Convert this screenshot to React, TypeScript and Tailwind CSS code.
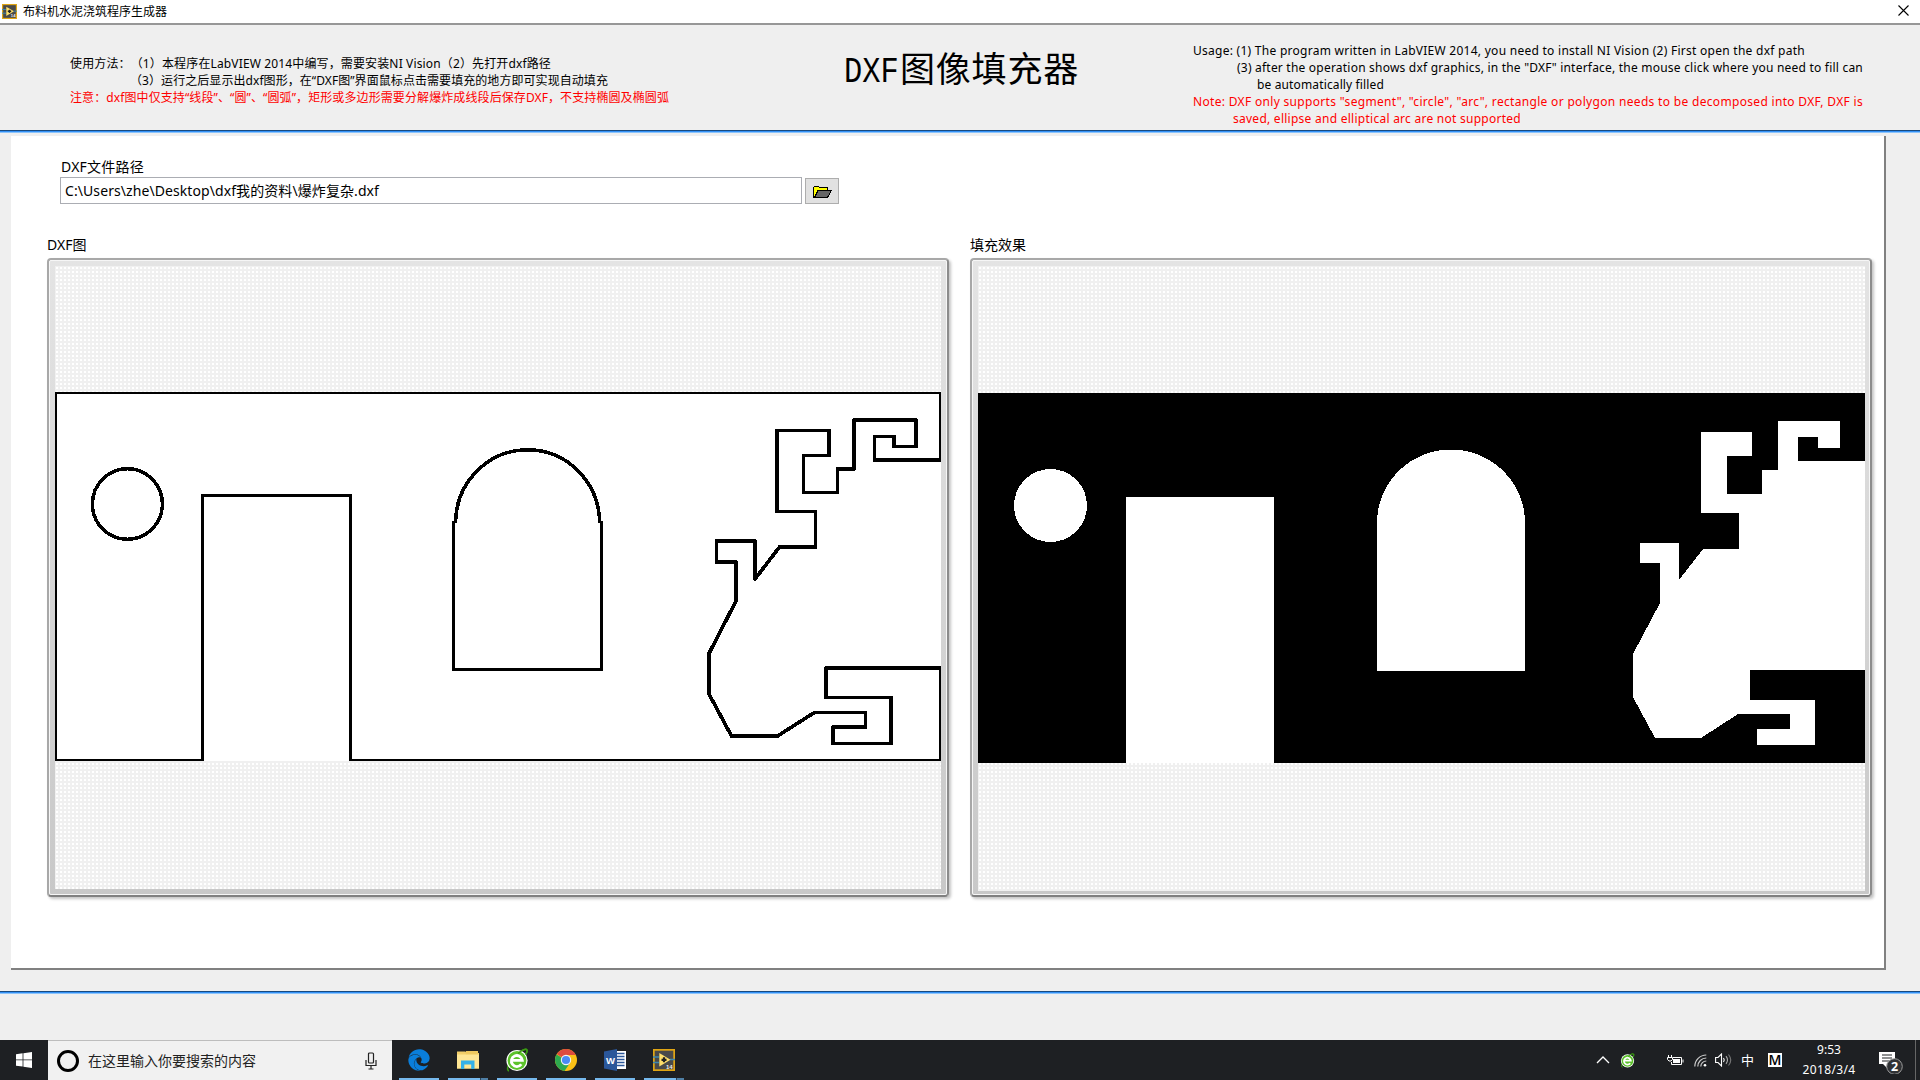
import { useLayoutEffect, useRef, useState } from "react";
import type { ReactNode } from "react";
import { FaEdge } from "react-icons/fa";

/** One line of text whose letter spacing is set so that it fills the given width. */
function Line({ children, width, className = "" }: { children: string; width: number; className?: string }) {
  const ref = useRef<HTMLSpanElement>(null);
  const [spacing, setSpacing] = useState(0);
  useLayoutEffect(() => {
    if (ref.current) {
      const natural = ref.current.getBoundingClientRect().width;
      setSpacing((width - natural) / Array.from(children).length);
    }
  }, [children, width]);
  return (
    <span className={`block whitespace-pre ${className}`}>
      <span ref={ref} style={{ letterSpacing: `${spacing}px` }}>
        {children}
      </span>
    </span>
  );
}

function LabViewIcon({ size }: { size: number }) {
  return (
    <svg width={size} height={size} viewBox="0 0 22 22" className="shrink-0">
      <rect x="0.8" y="0.8" width="20.4" height="20.4" fill="#4a4a4a" stroke="#e0a514" strokeWidth="1.8" />
      <path d="M-1 8h7M-1 13.5h7M17 10.5h6" stroke="#3d87ad" strokeWidth="1.4" />
      <path d="M6.3 4v13.5L17.5 10.8z" fill="#ffdf6b" />
      <path d="M8.5 10.8h5M11 8.3v5" stroke="#222" strokeWidth="2.2" />
      <text x="13" y="19.5" fontSize="6" fontWeight="700" fill="#eee" fontFamily="Liberation Sans, sans-serif">
        14
      </text>
    </svg>
  );
}

function GreenBrowser({ size }: { size: number }) {
  return (
    <svg width={size} height={size} viewBox="0 0 24 24" className="shrink-0">
      <path d="M4 23C1 22.500 3 15 9 9S21 0 22 2c.6 1.300-.5 3-1.500 4.500" fill="none" stroke="#3a9a12" strokeWidth="1.6" />
      <circle cx="12" cy="12.500" r="10.6" fill="#fff" />
      <circle cx="12" cy="12.500" r="9.4" fill="#5cc22b" />
      <path d="M16.300 16.300a5.500 5.500 0 1 1 1-4H7.5" fill="none" stroke="#fff" strokeWidth="2.8" />
      <path d="M13 5.500C17 2 21 0 22 2c.6 1.300-.5 3-1.500 4.500" fill="none" stroke="#3a9a12" strokeWidth="1.4" />
    </svg>
  );
}

function ChromeIcon() {
  return (
    <svg width="22" height="22" viewBox="0 0 22 22">
      <circle cx="11" cy="11" r="11" fill="#fbc116" />
      <path d="M11 11L1.500 5.500A11 11 0 0 0 9.500 21.900L15.300 13.500z" fill="#2da94f" />
      <path d="M11 11L1.800 5A11 11 0 0 1 20.800 6H11z" fill="#dd4b3e" />
      <circle cx="11" cy="11" r="5.200" fill="#f4f4f4" />
      <circle cx="11" cy="11" r="4.100" fill="#4a8af4" />
    </svg>
  );
}

function WordIcon() {
  return (
    <svg width="22" height="22" viewBox="0 0 22 22">
      <rect x="12" y="2" width="10" height="18" fill="#fff" />
      <path d="M13 4.500h7.500M13 7.500h7.500M13 10.500h7.500M13 13.500h7.500M13 16.500h7.500" stroke="#2b579a" strokeWidth="1.300" />
      <path d="M0 2.500L13 0v22L0 19.500z" fill="#2b579a" />
      <text x="2" y="14.500" fontSize="9.500" fontWeight="700" fill="#fff" fontFamily="Liberation Sans, sans-serif">
        W
      </text>
    </svg>
  );
}

function ExplorerIcon() {
  return (
    <svg width="22" height="20" viewBox="0 0 22 20">
      <path d="M0 1.500h8.500l1 1.500H22v15.500H0z" fill="#f3cf6a" />
      <path d="M9 1h12v4H9z" fill="#f0c95f" />
      <path d="M0 4.500h22v14H0z" fill="#ffe695" />
      <path d="M4 19v-8.500h13.500V19h-3.300v-4.500H7.300V19z" fill="#34b1e8" />
    </svg>
  );
}

function FolderIcon() {
  return (
    <svg width="19" height="13" viewBox="0 0 19 13" shapeRendering="crispEdges">
      <path d="M.5 12V2.500L2 1h3l1.500 1.500H14v3H6L1.500 12z" fill="#ffff00" stroke="#000" />
      <path d="M5 5.500h13.500L14.500 12.500H1.500z" fill="#666" stroke="#000" />
    </svg>
  );
}

function DxfDrawing() {
  return (
    <svg width="886" height="369" viewBox="55 392 886 369" shapeRendering="crispEdges" className="block">
      <rect x="55" y="392" width="886" height="369" fill="#fff" />
      <g fill="none" stroke="#000">
        <path d="M204 760H56V393H940V460M940 668V760H349" strokeWidth="2" />
        <path d="M202.500 761V495.500H350.500V761" strokeWidth="3" />
        <ellipse cx="127.400" cy="504" rx="35" ry="35.300" strokeWidth="3.500" />
        <path d="M455.600 523A72 73.200 0 0 1 599.600 523" strokeWidth="3.500" />
        <path d="M453.500 520.500V669.500H601.500V520.500" strokeWidth="3" />
        <path
          d="M941 460H874.500V436.500H894V446.500H916V420H854V469H837.500V492.500H803.500V455.500H829V430.500H777V511.500H815.500V547H779.500L755 579V541H716.500V562H736V601L709 653.500V694L731.500 736H777.500L814.500 712.500H865.500V727H833V743.500H891V697.500H826V668H941"
          strokeWidth="3.700"
          strokeLinejoin="round"
        />
      </g>
    </svg>
  );
}

function FilledDrawing() {
  return (
    <svg width="887" height="370" viewBox="978 393 887 370" shapeRendering="crispEdges" className="block">
      <rect x="978" y="393" width="887" height="370" fill="#000" />
      <g fill="#fff">
        <ellipse cx="1050.500" cy="505.500" rx="36.500" ry="36.500" />
        <path d="M1126 497H1274V763H1126z" />
        <path d="M1377 671V523A74 73.500 0 0 1 1525 523V671z" />
        <path d="M1865 461H1798V437H1818V448H1840V421H1778V470H1762V494H1727V456H1752V432H1701V513H1739V549H1703L1679 580V543H1640V563H1660V603L1633 654V697L1655 738H1701L1738 714H1790V729H1757V745H1815V700H1750V670H1865z" />
      </g>
    </svg>
  );
}

function ImageBox({ label, className, children }: { label: string; className: string; children: ReactNode }) {
  return (
    <section className="w-[902px]">
      <h2 className="h-[23px] text-[14px] leading-[19px]">{label}</h2>
      <div className="h-[639px] rounded-[4px] border-2 border-t-[#a8a8a8] border-r-[#8c8c8c] border-b-[#808080] border-l-[#a8a8a8] bg-linear-to-b from-[#e4e4e4] to-[#c8c8c8] shadow-[2px_2px_3px_#c4c4c4]">
        <div className={`h-[635px] rounded-[2px] border border-[#f6f6f6] ${className}`}>
          <div className="h-full bg-white bg-[linear-gradient(90deg,#f0f0f0_2px,transparent_2px),linear-gradient(#f0f0f0_2px,transparent_2px)] bg-size-[4px_4px] bg-position-[-1px_-1px]">
            {children}
          </div>
        </div>
      </div>
    </section>
  );
}

function TaskButton({ children, split = false }: { children: ReactNode; split?: boolean }) {
  return (
    <div className="flex h-full w-[49px] flex-col items-center">
      <div className="flex h-[38px] items-center pt-px">{children}</div>
      <div className="flex h-[2px] w-[40px] bg-[#76b9ed]">
        {split && <div className="ml-auto w-[8px] border-l border-[#2c4358] bg-[#4f7fa5]" />}
      </div>
    </div>
  );
}

function Taskbar() {
  return (
    <footer className="flex h-[40px] bg-[#1e2023] text-white">
      <div className="flex w-[48px] items-center justify-center">
        <svg width="16" height="16" viewBox="0 0 16 16" fill="#fff">
          <path d="M0 2.300L6.600 1.300V7.500H0zM7.400 1.200L16 0V7.500H7.400zM0 8.300H6.600V14.600L0 13.700zM7.400 8.300H16V16L7.400 14.800z" />
        </svg>
      </div>
      <div className="flex w-[344px] items-center border-t border-[#bdbdbd] bg-[#f1f1f1] pl-[9px] text-[#222]">
        <div className="h-[22px] w-[22px] rounded-full border-3 border-black" />
        <Line width={168} className="ml-[9px] text-[14px]">
          在这里输入你要搜索的内容
        </Line>
        <svg width="12" height="18" viewBox="0 0 12 18" className="mr-[15px] ml-auto" fill="none" stroke="#222" strokeWidth="1.200">
          <rect x="3.500" y="1" width="5" height="10" rx="1" />
          <path d="M1 8v5.500h10V8M6 13.500V17M3.500 17h5" />
        </svg>
      </div>
      <div className="flex pl-[2px]">
        <TaskButton>
          <FaEdge size={22} color="#0a7edb" />
        </TaskButton>
        <TaskButton split>
          <ExplorerIcon />
        </TaskButton>
        <TaskButton>
          <GreenBrowser size={24} />
        </TaskButton>
        <TaskButton>
          <ChromeIcon />
        </TaskButton>
        <TaskButton>
          <WordIcon />
        </TaskButton>
        <TaskButton split>
          <LabViewIcon size={22} />
        </TaskButton>
      </div>
      <div className="ml-auto flex items-center">
        <svg width="14" height="8" viewBox="0 0 14 8" fill="none" stroke="#fff" strokeWidth="1.300">
          <path d="M1 7l6-6 6 6" />
        </svg>
        <div className="ml-[10px]">
          <GreenBrowser size={15} />
        </div>
        <svg width="17" height="13" viewBox="0 0 17 13" fill="none" stroke="#fff" className="ml-[32px]">
          <path d="M6 3.500h8.500v7H4.500V8M16 5.500v3" />
          <path d="M6 5h7v4H6z" fill="#fff" stroke="none" />
          <path d="M.5 3.500h5v2l-1.500 1.500H2L.5 5.500zM1.500 1v2M4.500 1v2" />
        </svg>
        <svg width="13" height="13" viewBox="0 0 13 13" fill="none" stroke="#ccc" strokeWidth="1.200" className="ml-[10px]">
          <path d="M.8 12.500A11.500 11.500 0 0 1 12.300 1M3.800 12.500A8.500 8.500 0 0 1 12.300 4M6.800 12.500A5.500 5.500 0 0 1 12.300 7" />
          <circle cx="11" cy="11.300" r="1.300" fill="#fff" stroke="none" />
        </svg>
        <svg width="17" height="14" viewBox="0 0 17 14" fill="none" stroke="#fff" strokeWidth="1.100" className="ml-[8px]">
          <path d="M.6 4.500h2.400L6.500 1v12L3 9.500H.6z" />
          <path d="M8.500 5q1.500 2 0 4" />
          <path d="M11 3.200q3 3.800 0 7.600" stroke="#aaa" />
          <path d="M13.500 1.500q4.500 5.500 0 11" stroke="#777" />
        </svg>
        <span className="ml-[9px] w-[13px] text-[13px] leading-none">中</span>
        <span className="ml-[14px] flex h-[14px] w-[14px] items-center justify-center bg-white font-['Open_Sans','Noto_Sans',sans-serif] text-[14px] leading-none font-semibold text-black">
          M
        </span>
        <div className="ml-[21px] flex w-[52px] flex-col items-center text-[12px] leading-[20px]">
          <Line width={24}>9:53</Line>
          <Line width={53}>2018/3/4</Line>
        </div>
        <svg width="26" height="26" viewBox="0 0 26 26" className="mt-[2px] ml-[23px]">
          <path d="M1 4h16v12H9v4l-4-4H1z" fill="#fff" />
          <path d="M4 7h10M4 10h10M4 13h7" stroke="#1e2023" strokeWidth="1.100" />
          <circle cx="16.500" cy="18.500" r="7.800" fill="#303235" stroke="#999" />
          <text x="16.500" y="23" textAnchor="middle" fontSize="12.500" fontWeight="700" fill="#fff" fontFamily="Noto Sans, sans-serif">
            2
          </text>
        </svg>
        <div className="ml-[11px] h-[40px] w-[5px] border-l border-[#666]" />
      </div>
    </footer>
  );
}

export default function App() {
  return (
    <div className="flex h-[1080px] w-[1920px] flex-col overflow-hidden bg-[#efefef] font-['Noto_Sans','Noto_Sans_CJK_SC',sans-serif] text-black [text-spacing-trim:space-all]">
      <header className="flex h-[25px] items-center border-b-2 border-[#979797] bg-white pl-[2px]">
        <LabViewIcon size={15} />
        <Line width={144} className="ml-[6px] text-[12px] leading-[22px]">
          布料机水泥浇筑程序生成器
        </Line>
        <svg width="11" height="11" viewBox="0 0 11 11" stroke="#000" strokeWidth="1.100" className="mr-[11px] mb-[3px] ml-auto">
          <path d="M.5.5l10 10M10.500.5l-10 10" />
        </svg>
      </header>

      <div className="grid h-[105px] grid-cols-[844px_349px_1fr] text-[12px] leading-[17px]">
        <div className="pt-[30px] pl-[70px]">
          <Line width={481}>使用方法：（1）本程序在LabVIEW 2014中编写，需要安装NI Vision（2）先打开dxf路径</Line>
          <Line width={478} className="pl-[60px]">
            （3）运行之后显示出dxf图形，在“DXF图”界面鼠标点击需要填充的地方即可实现自动填充
          </Line>
          <Line width={599} className="text-[#ff0000]">
            注意：dxf图中仅支持“线段”、“圆”、“圆弧”，矩形或多边形需要分解爆炸成线段后保存DXF，不支持椭圆及椭圆弧
          </Line>
        </div>
        <h1 className="flex pt-[19px] text-[35px] leading-[50px]">
          <span className="w-[56px]">
            <span className="inline-block origin-left scale-x-[0.82] font-['Liberation_Mono',monospace] text-[37px] leading-[46px]">DXF</span>
          </span>
          <Line width={179}>图像填充器</Line>
        </h1>
        <div className="pt-[17px]">
          <Line width={612}>Usage: (1) The program written in LabVIEW 2014, you need to install NI Vision (2) First open the dxf path</Line>
          <Line width={626} className="pl-[44px]">
            (3) after the operation shows dxf graphics, in the "DXF" interface, the mouse click where you need to fill can
          </Line>
          <Line width={127} className="pl-[64px]">
            be automatically filled
          </Line>
          <Line width={670} className="text-[#ff0000]">
            Note: DXF only supports "segment", "circle", "arc", rectangle or polygon needs to be decomposed into DXF, DXF is
          </Line>
          <Line width={288} className="pl-[40px] text-[#ff0000]">
            saved, ellipse and elliptical arc are not supported
          </Line>
        </div>
      </div>

      <div className="h-[3px] border-t border-b border-t-[#17497f] border-b-[#8cc4fb] bg-[#3390f5]" />

      <main className="mt-[3px] ml-[11px] h-[834px] w-[1875px] border-r-2 border-b-2 border-[#808080] bg-white pl-[36px]">
        <div className="h-[99px] pt-[21px] pl-[13px]">
          <Line width={83} className="ml-px h-[20px] text-[14px] leading-[19px]">
            DXF文件路径
          </Line>
          <div className="flex items-end gap-[3px]">
            <div className="h-[27px] w-[742px] border border-[#abadb3] pl-[4px] text-[14px] leading-[25px]">
              <Line width={314}>C:\Users\zhe\Desktop\dxf我的资料\爆炸复杂.dxf</Line>
            </div>
            <button className="flex h-[26px] w-[34px] items-center justify-center border border-[#adadad] bg-[#e1e1e1]">
              <FolderIcon />
            </button>
          </div>
        </div>
        <div className="flex gap-[21px]">
          <ImageBox label="DXF图" className="pt-[5px] pr-[5px] pb-[5px] pl-[5px]">
            <div className="pt-[126px]">
              <DxfDrawing />
            </div>
          </ImageBox>
          <ImageBox label="填充效果" className="pt-[5px] pr-[4px] pb-[3px] pl-[5px]">
            <div className="pt-[127px]">
              <FilledDrawing />
            </div>
          </ImageBox>
        </div>
      </main>

      <div className="mt-[21px] mb-auto h-[3px] border-t border-b border-t-[#17497f] border-b-[#8cc4fb] bg-[#3390f5]" />
      <Taskbar />
    </div>
  );
}
